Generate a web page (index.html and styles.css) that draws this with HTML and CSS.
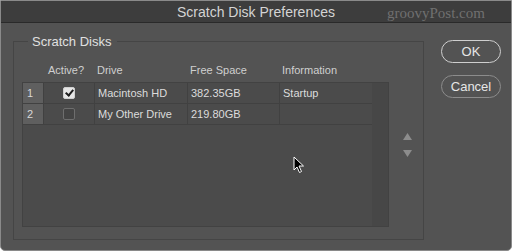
FILE: index.html
```html
<!DOCTYPE html>
<html lang="en">

<head>
    <meta charset="UTF-8">
    <meta name="viewport" content="width=device-width, initial-scale=1.0">
    <title>Scratch Disk Preferences</title>
    <link rel="stylesheet" href="styles.css">
</head>

<body>
    <div class="window">
        <div class="titlebar">
            Scratch Disk Preferences
            <span class="watermark">groovyPost.com</span>
        </div>

        <div class="content">
            <fieldset class="group">
                <legend>Scratch Disks</legend>

                <div class="cols head">
                    <span></span>
                    <span class="c-active">Active?</span>
                    <span>Drive</span>
                    <span>Free Space</span>
                    <span>Information</span>
                </div>

                <div class="table-row">
                    <div class="grid">
                        <div class="cols row">
                            <span class="idx">1</span>
                            <span class="c-active"><i class="check on"></i></span>
                            <span>Macintosh HD</span>
                            <span>382.35GB</span>
                            <span>Startup</span>
                        </div>
                        <div class="cols row">
                            <span class="idx">2</span>
                            <span class="c-active"><i class="check"></i></span>
                            <span>My Other Drive</span>
                            <span>219.80GB</span>
                            <span></span>
                        </div>
                        <div class="scroll"></div>
                    </div>

                    <div class="arrows">
                        <svg width="9" height="7" viewBox="0 0 9 7"><path d="M4.5 0 L9 7 L0 7 Z" fill="#8c8c8c"/></svg>
                        <svg width="9" height="7" viewBox="0 0 9 7"><path d="M0 0 L9 0 L4.5 7 Z" fill="#8c8c8c"/></svg>
                    </div>
                </div>
            </fieldset>

            <div class="buttons">
                <button class="btn default">OK</button>
                <button class="btn">Cancel</button>
            </div>
        </div>

        <svg class="cursor" width="13" height="18" viewBox="0 0 13 18">
            <path d="M1 1 L1 14 L4 11 L6.5 16.5 L8.5 15.5 L6 10 L10.5 10 Z" fill="#000" stroke="#fff" stroke-width="1"/>
        </svg>
    </div>
</body>

</html>
```

FILE: styles.css
```css
html {
    background: #ffffff;
}

body {
    margin: 0;
    font-family: 'Liberation Sans', Arial, sans-serif;
    color: #dcdcdc;
}

.window {
    position: relative;
    width: 510px;
    height: 249px;
    background: #535353;
    border: 1px solid #8a8a8a;
    border-radius: 0 0 5px 5px;
    overflow: hidden;
}

.titlebar {
    position: relative;
    height: 21px;
    line-height: 22px;
    background: #3d3d3d;
    border-bottom: 1px solid #2a2a2a;
    text-align: center;
    font-size: 14px;
    color: #d4d4d4;
}

.watermark {
    position: absolute;
    left: 386px;
    top: 1px;
    font-family: 'Liberation Serif', 'Times New Roman', serif;
    font-size: 15px;
    color: #707070;
}

.content {
    display: flex;
    align-items: flex-start;
}

.group {
    width: 411px;
    height: 206px;
    margin: 11px 0 0 12px;
    padding: 0 0 0 8px;
    border: 1px solid #454545;
    box-sizing: border-box;
}

.group legend {
    margin-left: 6px;
    padding: 0 6px 0 4px;
    font-size: 13px;
    line-height: 15px;
    color: #e0e0e0;
}

.cols {
    display: grid;
    grid-template-columns: 21px 51px 93px 92px 94px;
    font-size: 11px;
}

.head {
    margin-top: 14px;
    line-height: 14px;
    color: #cfcfcf;
}

.head span {
    padding-left: 3px;
}

.head .c-active {
    padding-left: 5px;
}

.table-row {
    display: flex;
    margin-top: 5px;
}

.grid {
    position: relative;
    width: 365px;
    height: 143px;
    background: #4b4b4b;
    border: 1px solid #424242;
}

.row {
    height: 20px;
    border-bottom: 1px solid #414141;
    width: 351px;
}

.row span {
    line-height: 20px;
    padding-left: 3px;
    border-right: 1px solid #414141;
}

.row .idx {
    background: #5f5f5f;
    color: #d8d8d8;
    padding-left: 4px;
}

.row .c-active {
    display: flex;
    justify-content: center;
    align-items: center;
    padding-left: 0;
}

.check {
    display: block;
    width: 10px;
    height: 10px;
    border: 1px solid #6e6e6e;
    border-radius: 2px;
    background: #444444;
}

.check.on {
    position: relative;
    background: #e6e6e6;
    border-color: #cfcfcf;
}

.check.on::after {
    content: "";
    position: absolute;
    left: 3px;
    top: 0;
    width: 3px;
    height: 6px;
    border: solid #1e1e1e;
    border-width: 0 2px 2px 0;
    transform: rotate(40deg);
}

.scroll {
    position: absolute;
    right: 0;
    top: 0;
    bottom: 0;
    width: 16px;
    background: #474747;
}

.arrows {
    display: flex;
    flex-direction: column;
    gap: 10px;
    margin: 51px 0 0 14px;
}

.buttons {
    display: flex;
    flex-direction: column;
    gap: 12px;
    margin: 17px 0 0 17px;
}

.btn {
    width: 60px;
    height: 23px;
    border: 1px solid #8c8c8c;
    border-radius: 12px;
    background: #535353;
    color: #e6e6e6;
    font-family: 'Liberation Sans', Arial, sans-serif;
    font-size: 13px;
    padding: 0;
}

.btn.default {
    border-color: #cfcfcf;
}

.cursor {
    position: absolute;
    left: 292px;
    top: 155px;
}
```
